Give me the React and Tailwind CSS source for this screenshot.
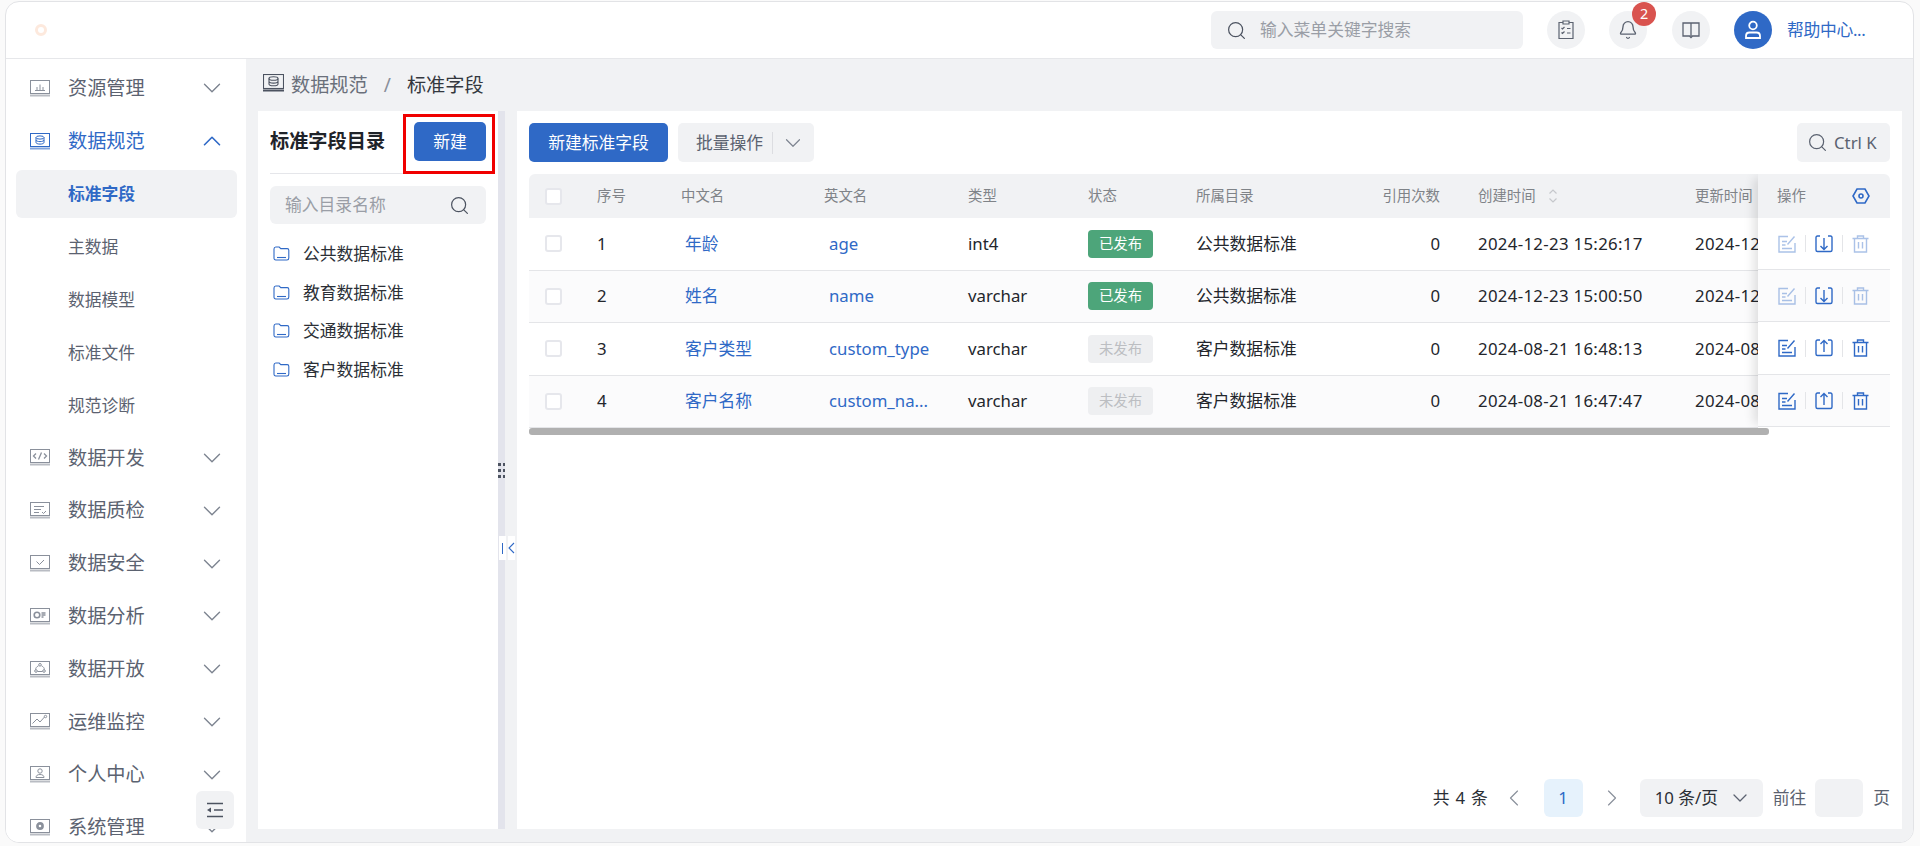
import React from 'react';
import { Search, ChevronDown, ChevronUp, ChevronLeft, ChevronRight, Bell } from 'lucide-react';

const FONT = { fontFamily: '"Noto Sans", "Noto Sans CJK SC", sans-serif' };

// monitor shaped menu icon, the glyph inside changes per entry
const ScreenIcon = ({ children, className = '' }) => (
  <svg viewBox="0 0 20 17" className={`w-[20px] h-[17px] shrink-0 ${className}`} fill="none" stroke="currentColor" strokeWidth="1">
    <rect x="0.5" y="0.5" width="19" height="13" />
    <rect x="0" y="14.5" width="20" height="2" fill="currentColor" stroke="none" opacity="0.6" />
    {children}
  </svg>
);

const MENU_GLYPHS = {
  res: <path d="M5 10.5h10M7 10V7M10 10V4.5M13 10V7" />,
  spec: (
    <g>
      <ellipse cx="10" cy="4.5" rx="4" ry="1.6" />
      <path d="M6 4.5v5c0 .9 1.8 1.6 4 1.6s4-.7 4-1.6v-5M6 7c0 .9 1.8 1.6 4 1.6s4-.7 4-1.6" />
    </g>
  ),
  dev: <path d="M6 4.5L3.5 7 6 9.5M14 4.5L16.5 7 14 9.5M11.5 3.5L8.5 10.5" strokeWidth="1.3" />,
  quality: <path d="M4 4.5h10M4 7.5h7M4 10.5h5M12 10l1.5 1.5L16 9" />,
  safe: <path d="M6.5 6.5L9.5 9.5 14 5" />,
  analyze: (
    <g>
      <circle cx="7" cy="7" r="2.8" strokeWidth="1.6" />
      <path d="M11.5 5h4M11.5 7h4M11.5 9h2" strokeWidth="1.3" />
    </g>
  ),
  open: (
    <g>
      <circle cx="10" cy="3.8" r="1.3" />
      <circle cx="6" cy="10" r="1.3" />
      <circle cx="14" cy="10" r="1.3" />
      <path d="M8.5 4.8C6.5 5.8 5.7 7 5.6 8.6M11.5 4.8c2 1 2.8 2.2 2.9 3.8M7.5 10.5h5" />
    </g>
  ),
  ops: (
    <g>
      <path d="M2.5 10.5L7 6l3 3 4.5-5" />
      <circle cx="15.5" cy="3.5" r="1.2" />
    </g>
  ),
  user: (
    <g>
      <circle cx="10" cy="5" r="2.2" />
      <path d="M6 11.5c0-2 1.5-3 4-3s4 1 4 3z" />
    </g>
  ),
  sys: <circle cx="10" cy="7" r="2.6" strokeWidth="2.6" />,
};

const MENU = [
  { label: '资源管理', glyph: 'res' },
  { label: '数据规范', glyph: 'spec', open: true },
  { label: '标准字段', sub: true, active: true },
  { label: '主数据', sub: true },
  { label: '数据模型', sub: true },
  { label: '标准文件', sub: true },
  { label: '规范诊断', sub: true },
  { label: '数据开发', glyph: 'dev' },
  { label: '数据质检', glyph: 'quality' },
  { label: '数据安全', glyph: 'safe' },
  { label: '数据分析', glyph: 'analyze' },
  { label: '数据开放', glyph: 'open' },
  { label: '运维监控', glyph: 'ops' },
  { label: '个人中心', glyph: 'user' },
  { label: '系统管理', glyph: 'sys' },
];

const ROWS = [
  { id: 1, cn: '年龄', en: 'age', type: 'int4', published: true, dir: '公共数据标准', created: '2024-12-23 15:26:17', updated: '2024-12-23 15:26:17', h: 'h-[52px]' },
  { id: 2, cn: '姓名', en: 'name', type: 'varchar', published: true, dir: '公共数据标准', created: '2024-12-23 15:00:50', updated: '2024-12-23 15:00:50', h: 'h-[52px]' },
  { id: 3, cn: '客户类型', en: 'custom_type', type: 'varchar', published: false, dir: '客户数据标准', created: '2024-08-21 16:48:13', updated: '2024-08-21 16:48:13', h: 'h-[53px]' },
  { id: 4, cn: '客户名称', en: 'custom_na...', type: 'varchar', published: false, dir: '客户数据标准', created: '2024-08-21 16:47:47', updated: '2024-08-21 16:47:47', h: 'h-[52px]' },
];

const FOLDERS = ['公共数据标准', '教育数据标准', '交通数据标准', '客户数据标准'];

const Folder = () => (
  <svg viewBox="0 0 17 15" className="w-[17px] h-[15px] text-[#2f69c6] shrink-0" fill="none" stroke="currentColor" strokeWidth="1.1">
    <path d="M1 3c0-1.2.6-2 1.8-2h3.4l1.6 1.6h6.4c1 0 1.6.7 1.6 1.7V12c0 1.2-.7 2-1.8 2H2.8C1.6 14 1 13.2 1 12z" />
    <path d="M4 11.5h9" />
  </svg>
);

const EditIcon = () => (
  <svg viewBox="0 0 18 18" className="w-[18px] h-[18px]" fill="none" stroke="currentColor" strokeWidth="1.4">
    <path d="M10 1.5H1v15.5h16V8M4 6.5h5M4 10h3.5M4 13.5h10M9.5 9.5L16.5 1.5" />
  </svg>
);

const TransferIcon = ({ up }) => (
  <svg viewBox="0 0 18 18" className="w-[18px] h-[18px]" fill="none" stroke="currentColor" strokeWidth="1.4">
    <path d="M5 1H2.5C1.5 1 1 1.6 1 2.5V15c0 .9.5 1.5 1.5 1.5h13c1 0 1.5-.6 1.5-1.500V2.5C17 1.6 16.5 1 15.5 1H13" />
    {up ? <path d="M9 13V2M5.5 5L9 1.5 12.5 5" /> : <path d="M9 3v11.5M5.5 11L9 14.5 12.5 11" />}
  </svg>
);

const TrashIcon = () => (
  <svg viewBox="0 0 17 18" className="w-[17px] h-[18px]" fill="none" stroke="currentColor" strokeWidth="1.4">
    <path d="M0.5 3.5h16M5.5 3.5V1h6v2.5M2.5 3.5V17h12V3.5M6.5 7v6.5M10.5 7v6.5" />
  </svg>
);

const Check = () => <span className="block w-[17px] h-[17px] rounded-[3px] border-2 border-[#e6e7ec] bg-white" />;

const Tag = ({ published }) => (
  <span
    className={`flex items-center justify-center w-[65px] h-[28px] rounded-[4px] text-[14.4px] ${
      published ? 'bg-[#4da57a] text-white' : 'bg-[#eeeff1] text-[#bcbec2]'
    }`}
  >
    {published ? '已发布' : '未发布'}
  </span>
);

const MenuItem = ({ item }) => {
  if (item.sub) {
    return (
      <div className="h-[52.8px] flex items-center">
        <div
          className={`w-[221px] ml-[10px] h-[48px] rounded-[6px] pl-[52px] flex items-center text-[16.8px] ${
            item.active ? 'bg-[#f1f2f4] text-[#2f69c6] font-bold' : 'text-[#5b6270]'
          }`}
        >
          {item.label}
        </div>
      </div>
    );
  }
  const color = item.open ? 'text-[#2f69c6]' : 'text-[#5b6270]';
  return (
    <div className={`h-[52.8px] flex items-center pl-[24px] text-[19.2px] ${color}`}>
      <ScreenIcon className={item.open ? '' : 'text-[#8a909b]'}>{MENU_GLYPHS[item.glyph]}</ScreenIcon>
      <span className="ml-[18px] flex-1">{item.label}</span>
      {item.open ? (
        <ChevronUp size={30} strokeWidth={1.3} className="mr-[19px]" />
      ) : (
        <ChevronDown size={30} strokeWidth={1.1} className="mr-[19px] text-[#7d8490]" />
      )}
    </div>
  );
};

const TopButton = ({ children, className = '' }) => (
  <div className={`relative w-[38px] h-[38px] rounded-full bg-[#f1f2f4] flex items-center justify-center text-[#5b6270] ${className}`}>
    {children}
  </div>
);

const App = () => {
  return (
    <div className="w-[1920px] h-[846px] bg-[#fafafa] pl-[5px] pt-[1px] overflow-hidden" style={FONT}>
      <div className="w-[1909px] h-[842px] rounded-[14px] border border-[#e2e3e6] bg-white overflow-hidden flex flex-col">
        {/* top bar */}
        <header className="h-[57px] shrink-0 border-b border-[#e6e7ea] flex items-center pl-[29px]">
          <span className="w-[12px] h-[12px] rounded-full border-[3px] border-[#fde9dd]" />
          <div className="ml-auto w-[312px] h-[38px] rounded-[6px] bg-[#f1f2f4] flex items-center pl-[15px] text-[#9a9ea6] text-[16.8px]">
            <Search size={21} strokeWidth={1.4} className="text-[#4c5360]" />
            <span className="ml-[13px]">输入菜单关键字搜索</span>
          </div>
          <TopButton className="ml-[24px]">
            <svg viewBox="0 0 16 20" className="w-[16px] h-[20px]" fill="none" stroke="currentColor" strokeWidth="1.2">
              <path d="M5 2.5H1v16h14v-16h-4M5 1h6v3H5zM3.5 8l1 1 2-2M9 8.5h3.5M3.5 12.5l1 1 2-2M9 13h3.5" />
            </svg>
          </TopButton>
          <TopButton className="ml-[24px]">
            <Bell size={20} strokeWidth={1.6} />
            <span className="absolute -top-[9px] left-[23px] w-[24px] h-[24px] rounded-full bg-[#d9534f] text-white text-[14.4px] flex items-center justify-center">
              2
            </span>
          </TopButton>
          <TopButton className="ml-[25px]">
            <svg viewBox="0 0 18 18" className="w-[18px] h-[18px]" fill="none" stroke="currentColor" strokeWidth="1.3">
              <path d="M1 2h16v13H10.5L9 16.5 7.5 15H1zM9 2v13" />
            </svg>
          </TopButton>
          <div className="ml-[24px] w-[38px] h-[38px] rounded-full bg-[#2f69c6] flex items-center justify-center">
            <svg viewBox="0 0 18 20" className="w-[18px] h-[20px]" fill="none" stroke="white" strokeWidth="1.8">
              <circle cx="9" cy="5.5" r="3.8" />
              <path d="M2 18v-2c0-2 1.5-3.5 3.5-3.5h7c2 0 3.5 1.5 3.5 3.5v2z" />
            </svg>
          </div>
          <span className="ml-[15px] text-[#2f69c6] text-[16.8px] w-[95px] tracking-[-0.3px]">帮助中心...</span>
          <span className="w-[31px]" />
        </header>

        <div className="flex-1 flex min-h-0">
          {/* sidebar */}
          <aside className="relative w-[240px] shrink-0 bg-white overflow-hidden pt-[3px]">
            {MENU.map((item) => (
              <MenuItem key={item.label} item={item} />
            ))}
            <div className="absolute left-[190px] top-[732px] w-[38px] h-[38px] rounded-[6px] bg-[#f1f2f4] flex items-center justify-center">
              <svg viewBox="0 0 18 16" className="w-[18px] h-[16px] text-[#4c5360]" fill="none" stroke="currentColor" strokeWidth="1.5">
                <path d="M1 1.5h16M8 8h9M1 14.5h16" />
                <path d="M5 5.5v5L1 8z" fill="currentColor" stroke="none" />
              </svg>
            </div>
          </aside>

          {/* content */}
          <main className="flex-1 flex flex-col bg-[#f1f2f4] min-w-0">
            <div className="h-[52px] shrink-0 flex items-center pl-[17px] text-[19.2px]">
              <svg viewBox="0 0 21 18" className="w-[21px] h-[18px] text-[#4c5360] -mt-[4px]" fill="none" stroke="currentColor" strokeWidth="1.1">
                <rect x="0.5" y="0.5" width="20" height="14" />
                <path d="M0 16.5h21" strokeWidth="2" />
                <ellipse cx="10.5" cy="4.5" rx="4.5" ry="1.8" />
                <path d="M6 4.5V10c0 1 2 1.8 4.5 1.8S15 11 15 10V4.5M6 7.3c0 1 2 1.800 4.5 1.800S15 8.300 15 7.300" />
              </svg>
              <span className="ml-[7px] text-[#6a707b]">数据规范</span>
              <span className="ml-[16px] text-[#8a909b]">/</span>
              <span className="ml-[16px] text-[#33373e]">标准字段</span>
            </div>

            <div className="flex-1 flex min-h-0 pl-[12px] pr-[11px] mb-[13px]">
              {/* directory panel */}
              <section className="relative w-[240px] shrink-0 bg-white px-[12px] text-[16.8px]">
                <div className="h-[63px] flex items-center justify-between border-b border-[#e5e6ea] pb-[1px]">
                  <span className="font-bold text-[19.2px] text-[#1f2329]">标准字段目录</span>
                  <span className="w-[72px] h-[39px] rounded-[5px] bg-[#2f69c6] text-white flex items-center justify-center">新建</span>
                </div>
                <div className="mt-[12px] h-[38px] rounded-[6px] bg-[#f1f2f4] flex items-center justify-between pl-[15px] pr-[16px] text-[#9a9ea6]">
                  <span>输入目录名称</span>
                  <Search size={21} strokeWidth={1.4} className="text-[#4c5360]" />
                </div>
                <ul className="mt-[10px]">
                  {FOLDERS.map((f) => (
                    <li key={f} className="h-[38.8px] flex items-center pl-[3px] gap-[13px] text-[#2b2f36]">
                      <Folder />
                      {f}
                    </li>
                  ))}
                </ul>
                {/* red annotation box from the screenshot */}
                <div className="absolute left-[145px] top-[3px] w-[92px] h-[60px] border-[3px] border-[#f00000]" />
              </section>

              {/* splitter */}
              <div className="relative w-[19px] shrink-0">
                <div className="w-[7px] h-full bg-[#e3e4ec]" />
                <div className="absolute left-0 top-[352px] w-[7px] grid grid-cols-2 gap-x-[2px] gap-y-[3px]">
                  {[0, 1, 2, 3, 4, 5].map((i) => (
                    <span key={i} className="h-[3px] bg-[#4c5360]" />
                  ))}
                </div>
                <div className="absolute left-[1px] top-[425px] flex gap-[2px] h-[24px]">
                  <span className="w-[7px] bg-white flex items-center justify-center">
                    <span className="w-[1px] h-[11px] bg-[#2f69c6]" />
                  </span>
                  <span className="w-[7px] bg-white flex items-center justify-center">
                    <svg viewBox="0 0 7 12" className="w-[7px] h-[12px] text-[#2f69c6]" fill="none" stroke="currentColor" strokeWidth="1.1">
                      <path d="M6 1L1 6l5 5" />
                    </svg>
                  </span>
                </div>
              </div>

              {/* table panel */}
              <section className="flex-1 min-w-0 bg-white px-[12px] flex flex-col text-[16.8px]">
                <div className="h-[63px] shrink-0 flex items-center">
                  <span className="w-[139px] h-[39px] rounded-[5px] bg-[#2f69c6] text-white flex items-center justify-center">新建标准字段</span>
                  <span className="ml-[10px] w-[136px] h-[39px] rounded-[5px] bg-[#f1f2f4] text-[#5b6270] flex items-center pl-[18px]">
                    批量操作
                    <span className="ml-[9px] w-[1px] h-[22px] bg-[#dcdde1]" />
                    <ChevronDown size={26} strokeWidth={1.1} className="ml-[7px] text-[#7d8490]" />
                  </span>
                  <span className="ml-auto w-[93px] h-[39px] rounded-[5px] bg-[#f1f2f4] text-[#5b6270] flex items-center pl-[10px] gap-[6px]">
                    <Search size={21} strokeWidth={1.4} />
                    Ctrl K
                  </span>
                </div>

                <div className="flex rounded-t-[6px] overflow-hidden">
                  <div className="flex-1 min-w-0 overflow-hidden">
                    <table className="table-fixed w-[1340px] text-[#23262c] border-collapse">
                      <thead>
                        <tr className="h-[44px] bg-[#f1f2f4] text-[14.4px] text-[#7f8388]">
                          <th className="w-[52px] pl-[16px] text-left font-normal"><Check /></th>
                          <th className="w-[84px] pl-[16px] text-left font-normal">序号</th>
                          <th className="w-[143px] pl-[16px] text-left font-normal">中文名</th>
                          <th className="w-[144px] pl-[16px] text-left font-normal">英文名</th>
                          <th className="w-[120px] pl-[16px] text-left font-normal">类型</th>
                          <th className="w-[108px] pl-[16px] text-left font-normal">状态</th>
                          <th className="w-[136px] pl-[16px] text-left font-normal">所属目录</th>
                          <th className="w-[146px] pr-[22px] text-right font-normal">引用次数</th>
                          <th className="w-[217px] pl-[16px] text-left font-normal">
                            <span className="inline-flex items-center">
                              创建时间
                              <svg viewBox="0 0 10 16" className="ml-[12px] w-[10px] h-[16px] text-[#c6c8cc]" fill="none" stroke="currentColor" strokeWidth="1.2">
                                <path d="M1.5 5.5L5 2l3.5 3.5M1.5 10.5L5 14l3.5-3.5" />
                              </svg>
                            </span>
                          </th>
                          <th className="w-[190px] pl-[16px] text-left font-normal">更新时间</th>
                        </tr>
                      </thead>
                      <tbody>
                        {ROWS.map((r, i) => (
                          <tr key={r.id} className={`${r.h} border-b border-[#e4e5e8] ${i % 2 ? 'bg-[#fbfbfc]' : 'bg-white'}`}>
                            <td className="pl-[16px]"><Check /></td>
                            <td className="pl-[16px]">{r.id}</td>
                            <td className="pl-[20px] text-[#2f69c6]">{r.cn}</td>
                            <td className="pl-[21px] text-[#2f69c6]">{r.en}</td>
                            <td className="pl-[16px]">{r.type}</td>
                            <td className="pl-[16px]"><Tag published={r.published} /></td>
                            <td className="pl-[16px]">{r.dir}</td>
                            <td className="pr-[22px] text-right">0</td>
                            <td className="pl-[16px] tracking-[0.32px]">{r.created}</td>
                            <td className="pl-[16px] tracking-[0.32px] whitespace-nowrap">{r.updated}</td>
                          </tr>
                        ))}
                      </tbody>
                    </table>
                  </div>

                  {/* fixed action column */}
                  <div className="w-[132px] shrink-0 shadow-[-8px_0_10px_-4px_rgba(0,0,0,0.12)] z-10">
                    <div className="h-[44px] bg-[#f1f2f4] flex items-center pl-[19px] pr-[20px] justify-between text-[14.4px] text-[#7f8388]">
                      操作
                      <svg viewBox="0 0 18 18" className="w-[18px] h-[18px] text-[#2f69c6]" fill="none" stroke="currentColor" strokeWidth="1.6">
                        <path d="M5 2h8l4 7-4 7H5L1 9z" />
                        <circle cx="9" cy="9" r="2" />
                      </svg>
                    </div>
                    {ROWS.map((r, i) => (
                      <div key={r.id} className={`${r.h} border-b border-[#e4e5e8] flex items-center pl-[20px] text-[#2f69c6] ${i % 2 ? 'bg-[#fbfbfc]' : 'bg-white'}`}>
                        <span className={r.published ? 'opacity-40' : ''}><EditIcon /></span>
                        <span className="mx-[9px] w-[1px] h-[17px] bg-[#e4e5e8]" />
                        <TransferIcon up={!r.published} />
                        <span className="mx-[9px] w-[1px] h-[17px] bg-[#e4e5e8]" />
                        <span className={r.published ? 'opacity-40' : ''}><TrashIcon /></span>
                      </div>
                    ))}
                  </div>
                </div>
                <div className="w-[1240px] h-[7px] rounded-[3px] bg-[#b0b0b0]" />

                <div className="mt-auto mb-[12px] flex items-center justify-end h-[38px] text-[#5b6270]">
                  <span className="text-[#2b2f36] tracking-[0.8px]">共 4 条</span>
                  <ChevronLeft size={28} strokeWidth={1} className="ml-[11px] text-[#8a909b]" />
                  <span className="ml-[16px] w-[39px] h-[38px] rounded-[6px] bg-[#e6f2fc] text-[#2f69c6] flex items-center justify-center">1</span>
                  <ChevronRight size={28} strokeWidth={1} className="ml-[15px] text-[#8a909b]" />
                  <span className="ml-[14px] w-[123px] h-[38px] rounded-[6px] bg-[#f1f2f4] text-[#2b2f36] flex items-center pl-[15px]">
                    10 条/页
                    <ChevronDown size={24} strokeWidth={1.3} className="ml-[10px] text-[#5b6270]" />
                  </span>
                  <span className="ml-[10px]">前往</span>
                  <span className="ml-[9px] w-[48px] h-[38px] rounded-[6px] bg-[#f1f2f4]" />
                  <span className="ml-[10px]">页</span>
                </div>
              </section>
            </div>
          </main>
        </div>
      </div>
    </div>
  );
};

export default App;
